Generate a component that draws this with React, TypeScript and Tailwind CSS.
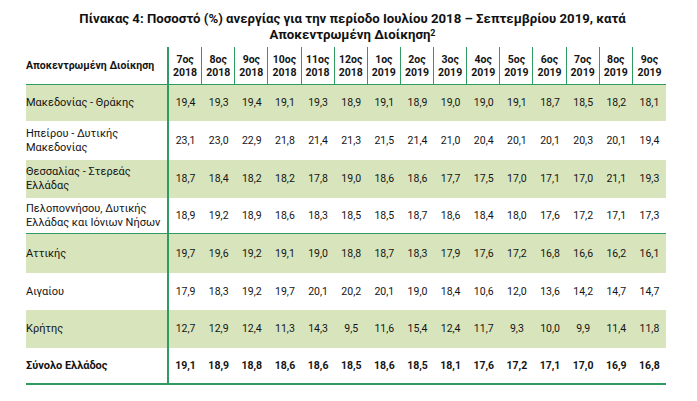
import React from "react";

const cols = [
  ["7ος", "2018"], ["8ος", "2018"], ["9ος", "2018"], ["10ος", "2018"], ["11ος", "2018"], ["12ος", "2018"],
  ["1ος", "2019"], ["2ος", "2019"], ["3ος", "2019"], ["4ος", "2019"], ["5ος", "2019"], ["6ος", "2019"],
  ["7ος", "2019"], ["8ος", "2019"], ["9ος", "2019"],
];

type Row = { label: string[]; vals: string[]; green: boolean; h: string; bold?: boolean; lineBelow?: boolean };

const rows: Row[] = [
  { label: ["Μακεδονίας - Θράκης"], vals: ["19,4","19,3","19,4","19,1","19,3","18,9","19,1","18,9","19,0","19,0","19,1","18,7","18,5","18,2","18,1"], green: true, h: "h-[36px]" },
  { label: ["Ηπείρου - Δυτικής", "Μακεδονίας"], vals: ["23,1","23,0","22,9","21,8","21,4","21,3","21,5","21,4","21,0","20,4","20,1","20,1","20,3","20,1","19,4"], green: false, h: "h-[39px]" },
  { label: ["Θεσσαλίας - Στερεάς", "Ελλάδας"], vals: ["18,7","18,4","18,2","18,2","17,8","19,0","18,6","18,6","17,7","17,5","17,0","17,1","17,0","21,1","19,3"], green: true, h: "h-[38px]" },
  { label: ["Πελοποννήσου, Δυτικής", "Ελλάδας και Ιόνιων Νήσων"], vals: ["18,9","19,2","18,9","18,6","18,3","18,5","18,5","18,7","18,6","18,4","18,0","17,6","17,2","17,1","17,3"], green: false, h: "h-[36px]", lineBelow: true },
  { label: ["Αττικής"], vals: ["19,7","19,6","19,2","19,1","19,0","18,8","18,7","18,3","17,9","17,6","17,2","16,8","16,6","16,2","16,1"], green: true, h: "h-[39px]" },
  { label: ["Αιγαίου"], vals: ["17,9","18,3","19,2","19,7","20,1","20,2","20,1","19,0","18,4","10,6","12,0","13,6","14,2","14,7","14,7"], green: false, h: "h-[37px]" },
  { label: ["Κρήτης"], vals: ["12,7","12,9","12,4","11,3","14,3","9,5","11,6","15,4","12,4","11,7","9,3","10,0","9,9","11,4","11,8"], green: true, h: "h-[38px]" },
  { label: ["Σύνολο Ελλάδος"], vals: ["19,1","18,9","18,8","18,6","18,6","18,5","18,6","18,5","18,1","17,6","17,2","17,1","17,0","16,9","16,8"], green: false, h: "h-[37px]", bold: true },
];

const grid = "grid grid-cols-[143px_repeat(15,minmax(0,1fr))]";

export default function App() {
  return (
    <div className="w-[697px] h-[401px] bg-white text-[#141414] overflow-hidden" style={{ fontFamily: "Roboto, 'Noto Sans', sans-serif" }}>
      <div className="pt-[11px] pl-[8px] text-center font-bold text-[13.2px] leading-[16px] text-[#111]">
        <div>Πίνακας 4: Ποσοστό (%) ανεργίας για την περίοδο Ιουλίου 2018 – Σεπτεμβρίου 2019, κατά</div>
        <div>
          Αποκεντρωμένη Διοίκηση<span className="text-[9px] align-top relative -top-[2px]">2</span>
        </div>
      </div>
      <div className="ml-[26px] w-[640px] mt-[4px] text-[10.5px]">
        <div className={`${grid} h-[38px] border-b-[1.5px] border-[#2f9a61]`}>
          <div className="flex items-center font-bold border-r-2 border-[#2f9a61]">Αποκεντρωμένη Διοίκηση</div>
          {cols.map((c, i) => (
            <div key={i} className={`flex flex-col items-center justify-center font-bold leading-[13px] ${i < 14 ? "border-r border-[#2f9a61]" : ""}`}>
              <span>{c[0]}</span>
              <span>{c[1]}</span>
            </div>
          ))}
        </div>
        {rows.map((r, ri) => (
          <div
            key={ri}
            className={`${grid} ${r.h} ${r.green ? "bg-[#d8e4bc]" : "bg-white"} ${r.lineBelow ? "border-b-[1.5px] border-[#2f9a61]" : ""} ${ri === rows.length - 1 ? "border-b-2 border-[#2f9a61]" : ""} ${r.bold ? "font-bold" : ""}`}
          >
            <div className="flex flex-col justify-center text-[11px] leading-[14px] border-r-2 border-[#2f9a61]">
              {r.label.map((l, li) => (
                <span key={li}>{l}</span>
              ))}
            </div>
            {r.vals.map((v, vi) => (
              <div key={vi} className="flex items-center justify-center">
                {v}
              </div>
            ))}
          </div>
        ))}
      </div>
    </div>
  );
}
